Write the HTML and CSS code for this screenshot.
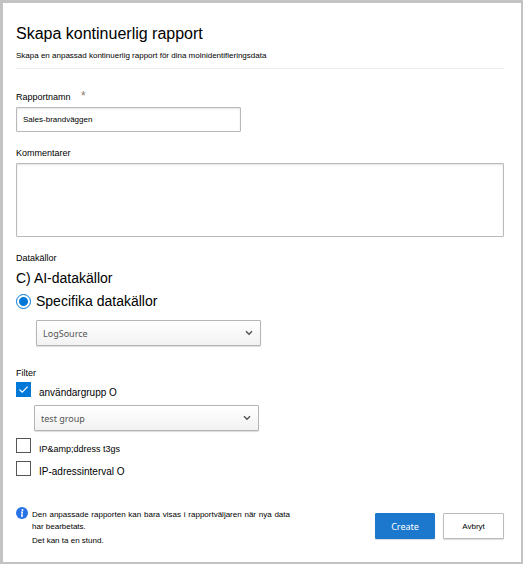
FILE: index.html
```html
<!DOCTYPE html>
<html lang="sv">

<head>
  <meta charset="UTF-8">
  <meta name="viewport" content="width=device-width, initial-scale=1.0">
  <title>Skapa kontinuerlig rapport</title>

  <link rel="stylesheet" href="styles.css">
</head>

<body>
  <form class="dialog">
    <header class="dialog-header">
      <h1>Skapa kontinuerlig rapport</h1>
      <p>Skapa en anpassad kontinuerlig rapport för dina molnidentifieringsdata</p>
    </header>

    <div class="field">
      <label for="reportName">Rapportnamn <span class="required">*</span></label>
      <input type="text" id="reportName" class="text-input" value="Sales-brandväggen">
    </div>

    <div class="field">
      <label for="comments">Kommentarer</label>
      <textarea id="comments" class="text-area"></textarea>
    </div>

    <section class="sources">
      <h2>Datakällor</h2>
      <p class="source-option">C) AI-datakällor</p>
      <div class="source-option">
        <input type="radio" id="specific" class="radio" name="source" checked>
        <label for="specific">Specifika datakällor</label>
      </div>
      <div class="select-wrap source-select">
        <select class="select" aria-label="Datakälla">
          <option>LogSource</option>
        </select>
        <svg class="chevron" viewBox="0 0 8 6"><path d="M1 1.2 4 4.2 7 1.2" /></svg>
      </div>
    </section>

    <section class="filters">
      <h2>Filter</h2>
      <div class="filter-option">
        <input type="checkbox" id="userGroup" class="checkbox" checked>
        <label for="userGroup">användargrupp O</label>
      </div>
      <div class="select-wrap group-select">
        <select class="select" aria-label="Grupp">
          <option>test group</option>
        </select>
        <svg class="chevron" viewBox="0 0 8 6"><path d="M1 1.2 4 4.2 7 1.2" /></svg>
      </div>
      <div class="filter-option filter-small">
        <input type="checkbox" id="ipTags" class="checkbox">
        <label for="ipTags">IP&amp;amp;ddress t3gs</label>
      </div>
      <div class="filter-option">
        <input type="checkbox" id="ipRange" class="checkbox">
        <label for="ipRange">IP-adressinterval O</label>
      </div>
    </section>

    <footer class="dialog-footer">
      <svg class="info-icon" viewBox="0 0 12 12">
        <circle cx="6" cy="6" r="6" fill="#2672e6" />
        <circle cx="6.5" cy="3" r="1" fill="#fff" />
        <path d="M5 5.2h1.4L5.7 9h1.2" fill="none" stroke="#fff" stroke-width="1.3" />
      </svg>
      <div class="note">
        <p>Den anpassade rapporten kan bara visas i rapportväljaren när nya data har bearbetats.</p>
        <p>Det kan ta en stund.</p>
      </div>
      <div class="actions">
        <button type="submit" class="btn btn-primary">Create</button>
        <button type="button" class="btn">Avbryt</button>
      </div>
    </footer>
  </form>
</body>
</html>
```

FILE: styles.css
```css
* {
  box-sizing: border-box;
}

body {
  margin: 0;
  font-family: "Liberation Sans", Arial, sans-serif;
  font-size: 9px;
  color: #000;
  background-color: #fff;
}

h1,
h2,
p {
  margin: 0;
  font-weight: normal;
}

.dialog {
  min-height: 100vh;
  padding: 21px 17px 10px 13px;
  border: 3px solid #c3c3c3;
  border-right-width: 2px;
  border-bottom-width: 2px;
}

.dialog-header {
  padding-bottom: 6px;
  margin-bottom: 21px;
  border-bottom: 1px solid #ebebeb;
}

.dialog-header h1 {
  font-size: 16px;
  line-height: 20px;
  margin-bottom: 6px;
}

.dialog-header p {
  font-size: 8px;
  line-height: 12px;
}

.field {
  margin-bottom: 15px;
}

.field label,
h2 {
  display: block;
  font-size: 9px;
  line-height: 12px;
}

.field label {
  margin-bottom: 4px;
}

.required {
  margin-left: 8px;
  font-size: 12px;
  line-height: 1;
  color: #8a7a6a;
}

.text-input,
.text-area {
  display: block;
  border: 1px solid #b9b9b9;
  border-radius: 1px;
  box-shadow: inset 0 1px 2px #e4e4e4;
  background-color: #fff;
  font-family: inherit;
  font-size: 8px;
  color: #000;
}

.text-input {
  width: 225px;
  height: 25px;
  padding: 0 6px;
}

.text-area {
  width: 100%;
  height: 74px;
  padding: 6px;
  resize: none;
}

.source-option {
  display: flex;
  align-items: center;
  gap: 5px;
  font-size: 14px;
  line-height: 18px;
  margin-top: 5px;
}

.radio,
.checkbox {
  appearance: none;
  flex: none;
  width: 15px;
  height: 15px;
  margin: 0;
  background-color: #fff;
}

.radio {
  border: 1px solid #0078d7;
  border-radius: 50%;
}

.radio:checked {
  background-image: radial-gradient(circle, #0078d7 4px, transparent 5px);
}

.checkbox {
  border: 1px solid #555;
}

.checkbox:checked {
  border-color: #0078d7;
  background: #0078d7 url("data:image/svg+xml,%3Csvg xmlns='http://www.w3.org/2000/svg' viewBox='0 0 13 13'%3E%3Cpath d='M2.5 6.5 5.2 9.2 10.7 3.7' fill='none' stroke='white' stroke-width='1.2'/%3E%3C/svg%3E") center / 13px;
}

.select-wrap {
  position: relative;
  width: 225px;
}

.select {
  appearance: none;
  display: block;
  width: 100%;
  height: 26px;
  padding: 0 6px;
  border: 1px solid #b5b5b5;
  border-radius: 1px;
  box-shadow: 0 1px 1px #ddd;
  background: linear-gradient(#fff, #f2f2f2);
  font-family: "Noto Sans", sans-serif;
  font-size: 9px;
  color: #555;
}

.chevron {
  position: absolute;
  top: 10px;
  right: 8px;
  width: 8px;
  height: 6px;
  fill: none;
  stroke: #555;
  stroke-width: 1.5;
  pointer-events: none;
}

.source-select {
  margin: 10px 0 21px 20px;
}

.filter-option {
  display: flex;
  align-items: flex-start;
  gap: 8px;
  height: 18px;
  font-size: 10px;
  line-height: 12px;
  margin-top: 5px;
}

.filter-option label {
  padding-top: 5px;
}

.filter-small {
  font-size: 9px;
}

.filters h2 + .filter-option {
  margin-top: 3px;
}

.group-select {
  margin: 5px 0 7px 18px;
}

.dialog-footer {
  display: flex;
  align-items: flex-start;
  margin-top: 28px;
}

.info-icon {
  flex: none;
  width: 12px;
  height: 12px;
  margin-right: 4px;
}

.note {
  flex: 0 1 258px;
  padding-top: 2px;
  font-size: 8px;
  line-height: 12px;
  text-align: justify;
}

.note p + p {
  margin-top: 2px;
}

.actions {
  display: flex;
  gap: 8px;
  margin-left: auto;
  padding-top: 6px;
}

.btn {
  width: 61px;
  height: 26px;
  padding: 0;
  border: 1px solid #bbb;
  border-radius: 1px;
  box-shadow: 0 1px 1px #ddd;
  background-color: #fff;
  font-family: inherit;
  font-size: 8px;
  color: #000;
}

.btn-primary {
  width: 60px;
  border-color: #1b78cc;
  background-color: #1b78cc;
  font-family: "Noto Sans", sans-serif;
  font-size: 9px;
  color: #fff;
}
```
